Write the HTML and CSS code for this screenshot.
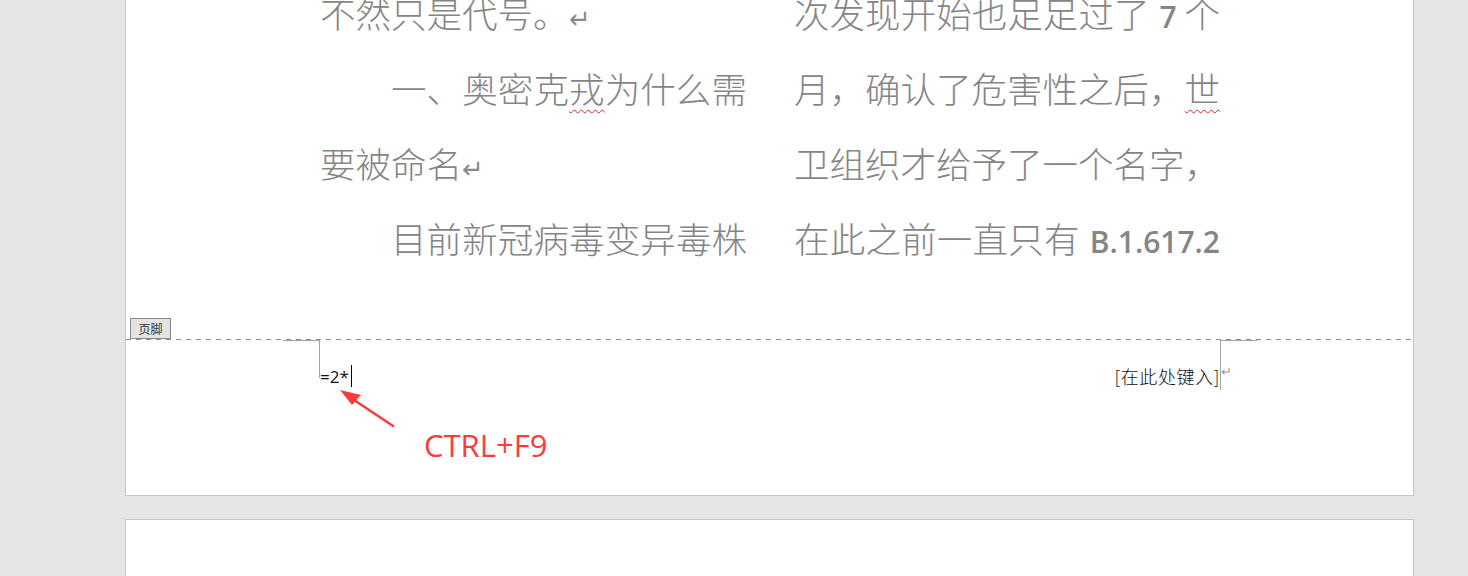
FILE: index.html
```html
<!DOCTYPE html>
<html lang="zh-CN">
  <head>
    <meta charset="UTF-8" />
    <meta name="viewport" content="width=device-width, initial-scale=1" />
    <title>页脚 - 域代码</title>
    <link rel="stylesheet" href="styles.css">
  </head>
  <body>
    <div class="page page-first">
      <div class="page-body">
        <div class="column">
          <div class="line">不然只是代号。<span class="mark">↵</span></div>
          <div class="line full indent">一、奥密克<span class="spell">戎</span>为什么需</div>
          <div class="line">要被命名<span class="mark">↵</span></div>
          <div class="line full indent">目前新冠病毒变异毒株</div>
        </div>
        <div class="column">
          <div class="line full">次发现开始也足足过了 <span class="latin">7</span> 个</div>
          <div class="line full">月，确认了危害性之后，<span class="spell">世</span></div>
          <div class="line full">卫组织才给予了一个名字，</div>
          <div class="line full">在此之前一直只有 <span class="latin">B.1.617.2</span></div>
        </div>
      </div>

      <div class="footer">
        <span class="footer-tag">页脚</span>
        <div class="footer-rule"></div>
        <span class="corner corner-left"></span>
        <span class="corner corner-right"></span>
        <div class="footer-row">
          <span class="field">=2*<span class="caret"></span></span>
          <span class="placeholder">[在此处键入]<span class="return">↵</span></span>
        </div>

        <!-- annotation drawn over the page -->
        <svg class="arrow" width="70" height="50" viewBox="0 0 70 50">
          <path d="M62 45 L20 17" stroke="#fa3c3c" stroke-width="2.4" stroke-linecap="round" />
          <path d="M9 9 L30 14 L21 24 Z" fill="#fa3c3c" />
        </svg>
        <span class="hotkey">CTRL+F9</span>
      </div>
    </div>

    <div class="page page-next"></div>
  </body>
</html>
```

FILE: styles.css
```css
:root {
  --desk: #e5e5e5;
  --paper: #fff;
  --edge: #c6c6c6;
  --ink: #858585;
  --guide: #a3a3a3;
  --red: #fa3c3c;
}
body {
  margin: 0;
  background: var(--desk);
  overflow: hidden;
  font-family: "Noto Sans CJK SC", sans-serif;
}
.page {
  background: var(--paper);
  border: 1px solid var(--edge);
  width: 1287px;
  margin-left: 125px;
}
.page-first {
  margin-top: -100px;
  border-top: none;
}
.page-next {
  margin-top: 23px;
  height: 56px;
  border-bottom: none;
}
.page-body {
  padding: 75px 192px 0 194px;
  display: grid;
  grid-template-columns: 427px 426px;
  column-gap: 47px;
  color: var(--ink);
  font-size: 35.5px;
  font-weight: 300;
  line-height: 75px;
}
.line {
  white-space: nowrap;
  height: 75px;
}
.line.full {
  text-align: justify;
  text-align-last: justify;
}
.line.indent {
  padding-left: 71px;
}
.latin {
  font-family: "Open Sans", sans-serif;
  font-size: 30px;
  font-weight: 600;
  padding-left: 2px;
}
.mark {
  font-family: "DejaVu Sans", sans-serif;
  font-size: 26px;
  color: #8a8a8a;
}
.spell {
  text-decoration: underline wavy #e02020;
  text-decoration-thickness: 1px;
  text-underline-offset: 6px;
}
.footer {
  position: relative;
  margin-top: 64px;
  height: 156px;
}
.footer-rule {
  height: 1px;
  background: repeating-linear-gradient(to right, #8a8a8a 0 5px, transparent 5px 10px);
}
.footer-tag {
  position: absolute;
  left: 4px;
  top: -21px;
  width: 39px;
  height: 19px;
  border: 1px solid #8a8a8a;
  background: #e3e3e3;
  font-size: 12px;
  line-height: 19px;
  text-align: center;
  color: #333;
}
.corner {
  position: absolute;
  top: 1px;
  width: 36px;
  border-top: 1px solid var(--guide);
}
.corner-left {
  left: 157px;
  height: 37px;
  border-right: 1px solid var(--guide);
}
.corner-right {
  left: 1094px;
  height: 49px;
  border-left: 1px solid var(--guide);
}
.footer-row {
  display: flex;
  justify-content: space-between;
  align-items: center;
  padding: 25px 193px 0 194px;
  height: 22px;
  font-size: 18px;
  color: #111;
}
.field {
  font-family: "Open Sans", sans-serif;
  font-size: 17px;
  display: flex;
  align-items: center;
}
.caret {
  display: inline-block;
  width: 1px;
  height: 22px;
  margin-left: 2px;
  background: #000;
}
.placeholder {
  position: relative;
  font-weight: 300;
  letter-spacing: 0.6px;
}
.return {
  position: absolute;
  left: 100%;
  top: 1px;
  margin-left: 1px;
  font-family: "DejaVu Sans", sans-serif;
  font-size: 13px;
  color: #999;
}
.arrow {
  position: absolute;
  left: 205px;
  top: 42px;
}
.hotkey {
  position: absolute;
  left: 298px;
  top: 85px;
  font-family: "Open Sans", sans-serif;
  font-size: 31px;
  color: var(--red);
}
```
